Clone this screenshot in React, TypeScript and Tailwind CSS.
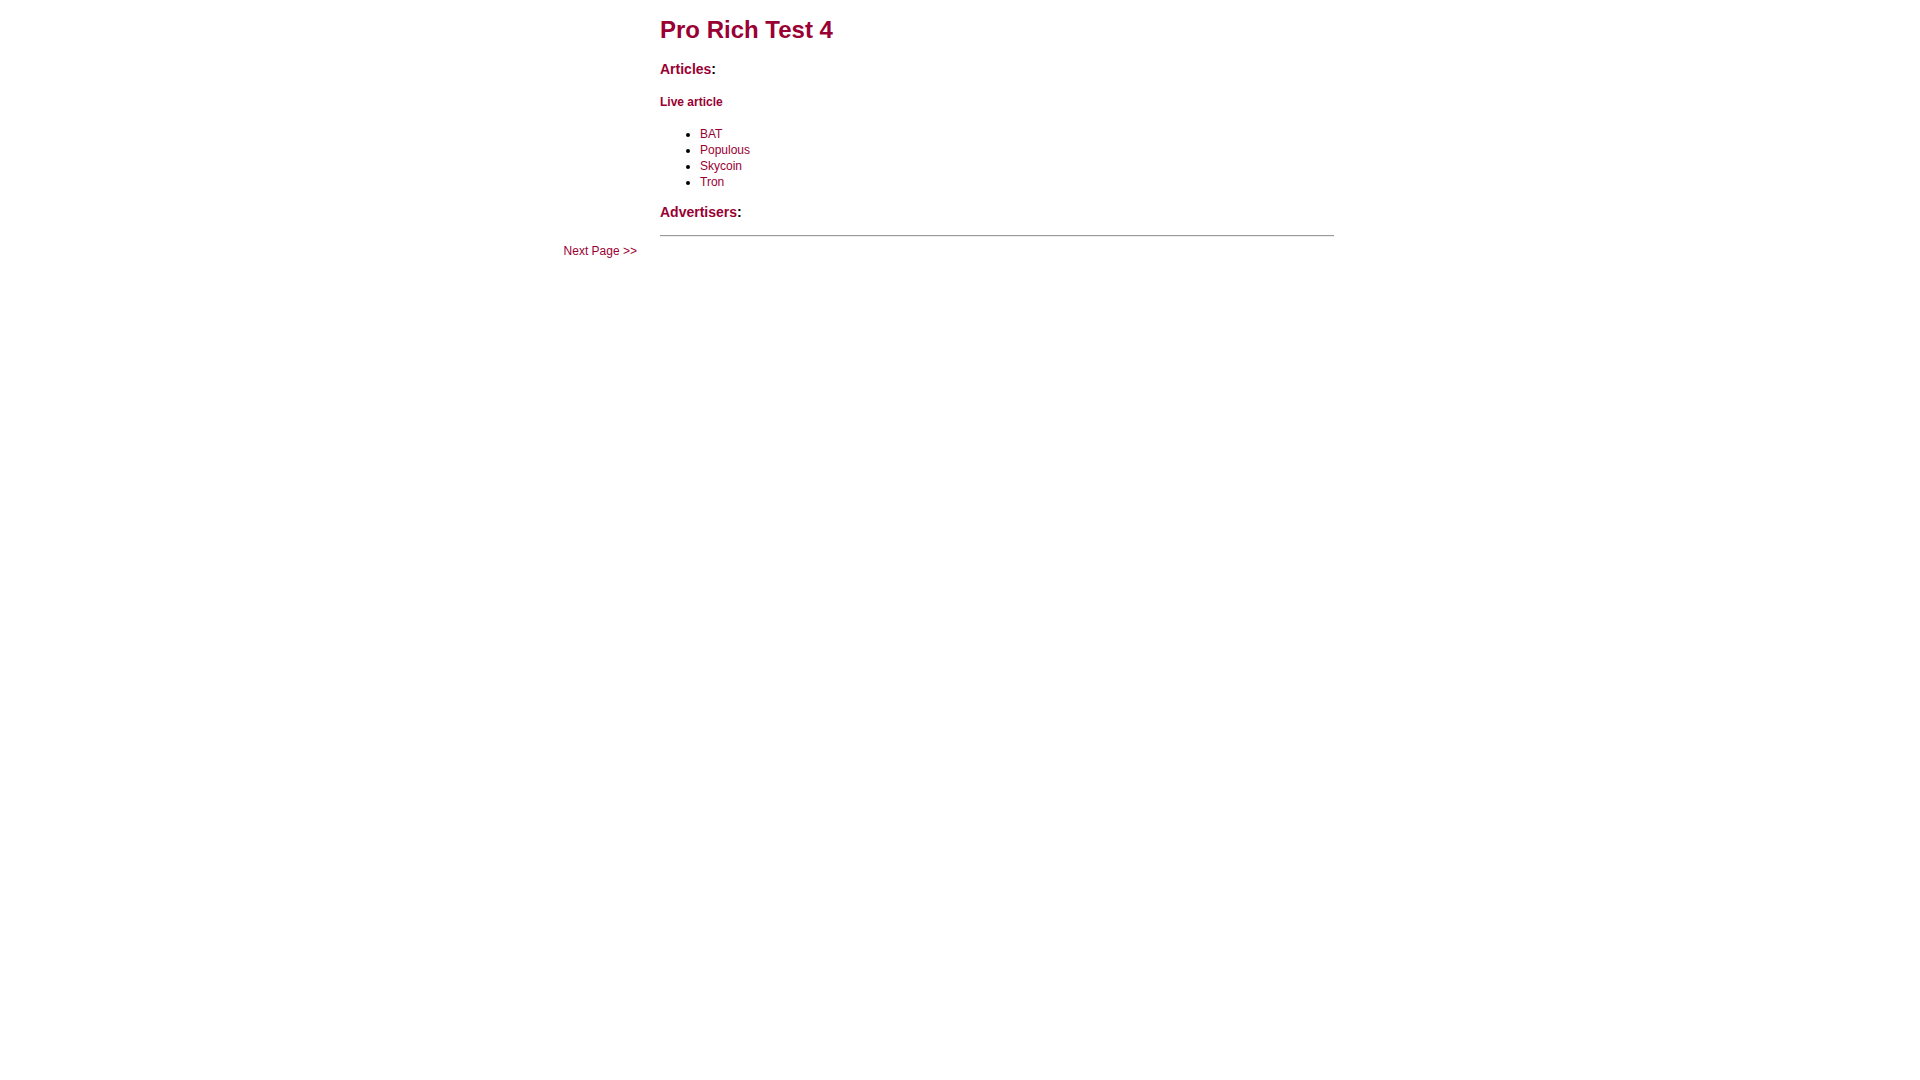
const coins = ['BAT', 'Populous', 'Skycoin', 'Tron']

export default function App() {
  return (
    <div className="min-h-screen bg-white text-black font-['Liberation_Sans',Arial,sans-serif]">
      <div className="mx-auto flex w-[800px]">
        {/* left nav column */}
        <div className="w-[77px] pt-[243px] text-right text-[12px] leading-[16px]">
          <a href="#" className="text-[#990033]">Next Page &gt;&gt;</a>
        </div>

        {/* main column */}
        <div className="ml-[23px] w-[674px] pt-[16px]">
          <h1 className="text-[24px] leading-[28px] font-bold text-[#990033]">Pro Rich Test 4</h1>

          <h3 className="mt-[17px] text-[14px] leading-[16px] font-bold">
            <span className="text-[#990033]">Articles</span>:
          </h3>

          <h4 className="mt-[18px] text-[12px] leading-[14px] font-bold text-[#990033]">Live article</h4>

          <ul className="mt-[17px] list-disc pl-[40px] text-[12px] leading-[16px]">
            {coins.map(c => (
              <li key={c}>
                <a href="#" className="text-[#990033]">{c}</a>
              </li>
            ))}
          </ul>

          <h3 className="mt-[14px] text-[14px] leading-[16px] font-bold">
            <span className="text-[#990033]">Advertisers</span>:
          </h3>

          <div className="mt-[15px] h-[2px] border-t border-b border-t-[#9a9a9a] border-b-[#eeeeee]" />
        </div>
      </div>
    </div>
  )
}
